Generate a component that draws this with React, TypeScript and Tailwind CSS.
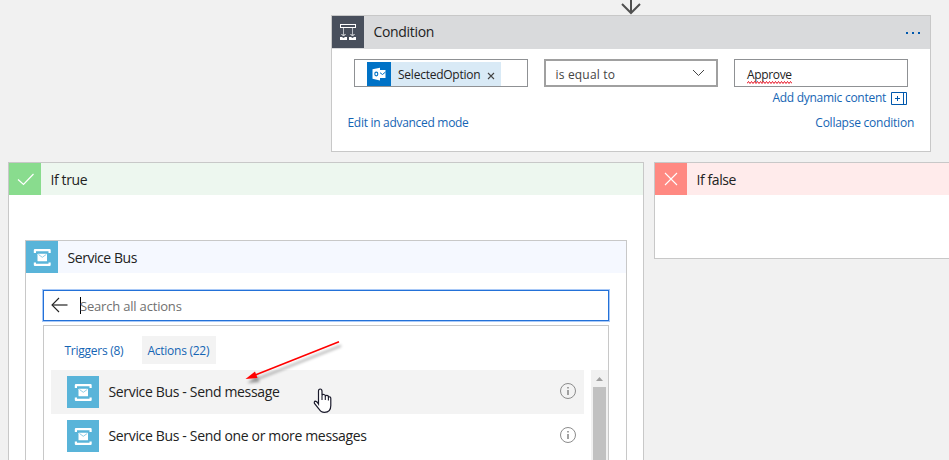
import React from 'react';

function ServiceBusIcon() {
  return (
    <span className="flex h-8 w-8 shrink-0 items-center justify-center bg-[#59b4d9]">
      <svg width="32" height="32" viewBox="0 0 32 32" fill="none">
        <path d="M8.900 12V9.200h14.700V12M8.900 21.500v2.400h14.700v-2.400" stroke="#fff" strokeWidth="2.200" strokeLinejoin="round" />
        <rect x="11.500" y="12.800" width="9.500" height="7.400" rx="0.500" fill="#fff" />
        <path d="M12.500 13.500l3.800 2.800 3.900-2.800" stroke="#8fcde6" strokeWidth="1" />
      </svg>
    </span>
  );
}

function InfoIcon() {
  return (
    <svg width="18" height="18" viewBox="0 0 18 18" fill="none">
      <circle cx="9" cy="9" r="7.500" stroke="#8c8c8c" />
      <path d="M9 5v1.500M9 8v5" stroke="#8c8c8c" strokeWidth="1.600" />
    </svg>
  );
}

function ActionRow({ label, active }: { label: string; active?: boolean }) {
  return (
    <div className={`flex h-11 w-[533px] items-center pl-4 pr-[7px] ${active ? 'bg-[#f3f3f3]' : 'bg-white'}`}>
      <ServiceBusIcon />
      <span className="-mt-px ml-[9.5px] grow text-[14px] tracking-[-0.34px]">{label}</span>
      <span className="-mt-[2px]"><InfoIcon /></span>
    </div>
  );
}

export default function App() {
  return (
    <div className="relative h-[460px] w-[949px] overflow-hidden whitespace-nowrap bg-[#f1f1f1] font-['Open_Sans','Noto_Sans',sans-serif] text-[#222]">
      <div className="flex h-[15px] pl-[620px]">
        <svg width="22" height="15" viewBox="0 0 22 15" fill="none">
          <path d="M11 0v13M2 4l9 9 9-9" stroke="#505050" strokeWidth="2" />
        </svg>
      </div>

      <section className="ml-[331px] h-[137px] w-[600px] border border-[#c8c8c8] bg-white">
        <header className="flex h-[33px] items-start bg-[#d9dadc]">
          <span className="h-8 w-8 bg-[#484f5c]">
            <svg width="32" height="32" viewBox="0 0 32 32" fill="none">
              <rect x="8.500" y="8.500" width="15" height="3" stroke="#fff" />
              <path d="M11.500 12v7M20.500 12v7" stroke="#b9bdc3" />
              <path d="M9.500 18l2 2 2-2M18.500 18l2 2 2-2" stroke="#fff" />
              <path d="M8 21h2l1.500 1L13 21h2v3H8zM17 21h2l1.500 1 1.500-1h2v3h-7z" fill="#fff" />
            </svg>
          </span>
          <span className="ml-[9.5px] grow text-[14px] leading-8 tracking-[-0.32px]">Condition</span>
          <svg className="mr-2 mt-[15px]" width="17" height="4" viewBox="0 0 17 4" fill="#0058ad">
            <path d="M1 1h2v2H1zM7 1h2v2H7zM13 1h2v2h-2z" />
          </svg>
        </header>
        <div className="flex gap-4 pl-[22px] pt-[10px]">
          <div className="flex h-7 w-[174px] border border-[#8f9194] pl-3 pt-[2px]">
            <div className="flex h-6 w-[134px] items-center bg-[#d9eaf6]">
              <svg width="24" height="24" viewBox="0 0 24 24" fill="none">
                <path d="M0 0h24v24H0z" fill="#0072c6" />
                <path d="M12 8h6.500v8H12z" fill="#fff" />
                <path d="M12 10l3.500 2.500 3-2.500" stroke="#0072c6" />
                <path d="M5.500 7.200l7.500-1.400v12.600l-7.500-1.600z" fill="#fff" />
                <ellipse cx="9.300" cy="12" rx="1.500" ry="1.900" stroke="#0072c6" strokeWidth="1.100" />
              </svg>
              <span className="ml-[7px] mt-[2px] text-[12px] tracking-[-0.24px]">SelectedOption</span>
              <svg className="ml-[7px] mt-[4px]" width="8" height="8" viewBox="0 0 8 8">
                <path d="M1 1l6 6M7 1L1 7" stroke="#444" strokeWidth="1.100" />
              </svg>
            </div>
          </div>
          <div className="flex h-7 w-[174px] items-center border-2 border-[#a0a0a0] pl-[9.5px] pr-[11px]">
            <span className="mt-[3px] grow text-[12px] tracking-[0.18px] text-[#444]">is equal to</span>
            <svg width="13" height="8" viewBox="0 0 13 8" fill="none">
              <path d="M1 1l5.500 5.500L12 1" stroke="#444" />
            </svg>
          </div>
          <div className="flex h-7 w-[174px] items-start border border-[#8f9194] pl-3">
            <span className="flex flex-col pt-[6px] text-[12px] leading-[18px]">
              <span className="tracking-[-0.35px]">Approve</span>
              <svg className="-mt-[3px]" width="45" height="3" viewBox="0 0 45 3" fill="none">
                <path d="M0 2.500l1.500-2 1.500 2 1.500-2 1.500 2 1.500-2 1.500 2 1.500-2 1.500 2 1.500-2 1.500 2 1.500-2 1.500 2 1.500-2 1.500 2 1.500-2 1.500 2 1.500-2 1.500 2 1.500-2 1.500 2 1.500-2 1.500 2 1.500-2 1.500 2 1.500-2 1.500 2 1.500-2 1.500 2 1.500-2 1.500 2" stroke="#e81123" />
              </svg>
            </span>
          </div>
        </div>
        <div className="flex h-[22px] items-center justify-end gap-[5px] pr-[23px] text-[12px] text-[#1565b4]">
          <span className="tracking-[-0.27px]">Add dynamic content</span>
          <svg width="16" height="13" viewBox="0 0 16 13" fill="none" stroke="#0058ad">
            <path d="M.5.5h15v12H.5zM12.500.5v12M4 6.500h5M6.500 4v5" />
          </svg>
        </div>
        <div className="flex h-[28px] items-center justify-between pl-[15.5px] pr-4 text-[12px] tracking-[-0.3px] text-[#1565b4]">
          <span>Edit in advanced mode</span>
          <span className="tracking-[-0.24px]">Collapse condition</span>
        </div>
      </section>

      <div className="mt-[10px] flex items-start gap-[10px] pl-2">
        <section className="h-[320px] w-[636px] shrink-0 border border-[#c8c8c8] bg-white">
          <header className="flex h-8 items-center bg-[#edf7ef]">
            <span className="h-8 w-8 bg-[#89dc8e]">
              <svg width="32" height="32" viewBox="0 0 32 32" fill="none">
                <path d="M9 16.500l5.500 5L24.500 11" stroke="#fff" strokeWidth="1.200" />
              </svg>
            </span>
            <span className="ml-[9.5px] text-[14px] tracking-[-0.4px]">If true</span>
          </header>

          <div className="ml-4 mt-[45px] h-[260px] w-[602px] border border-[#c8c8c8] bg-white">
            <header className="flex h-8 items-center bg-[#f5f8ff]">
              <ServiceBusIcon />
              <span className="ml-[9.5px] text-[14px] tracking-[-0.44px]">Service Bus</span>
            </header>
            <div className="ml-[17px] mt-[17px] flex h-[31px] w-[566px] items-center border border-[#2371d8] pl-[7px] shadow-[0_0_0_1px_#a9c9f7]">
              <svg className="-mt-px" width="17" height="16" viewBox="0 0 17 16" fill="none" stroke="#222">
                <path d="M16.500 8H1" strokeWidth="1.200" />
                <path d="M8 1L1 8l7 7" strokeWidth="1.100" />
              </svg>
              <span className="ml-[12px] h-[17px] w-px bg-black" />
              <span className="-ml-px mt-[2px] text-[13px] tracking-[-0.19px] text-[#707070]">Search all actions</span>
            </div>
            <div className="ml-[17px] mt-1 h-[200px] w-[566px] border border-[#c8c8c8] bg-white pt-[10px]">
              <div className="flex h-7 items-center pl-[20.5px] text-[12px] tracking-[-0.26px] text-[#1565b4]">
                <span className="w-[77.5px] pt-[2px]">Triggers (8)</span>
                <span className="flex h-7 w-[74px] items-center bg-[#f3f3f3] pl-[5.5px] pt-[2px]">Actions (22)</span>
              </div>
              <div className="mt-[6px] flex gap-[7px] pl-[7px]">
                <div>
                  <ActionRow label="Service Bus - Send message" active />
                  <ActionRow label="Service Bus - Send one or more messages" />
                </div>
                <div className="flex h-[150px] w-[17px] flex-col items-center bg-[#f1f1f1]">
                  <svg width="17" height="17" viewBox="0 0 17 17">
                    <path d="M5 11l3.500-4L12 11z" fill="#a0a0a0" />
                  </svg>
                  <span className="h-[133px] w-[13px] bg-[#c1c1c1]" />
                </div>
              </div>
            </div>
          </div>
        </section>

        <section className="h-[97px] w-[400px] shrink-0 border border-[#c8c8c8] bg-white">
          <header className="flex h-8 items-center bg-[#ffebeb]">
            <span className="h-8 w-8 bg-[#ff8982]">
              <svg width="32" height="32" viewBox="0 0 32 32" fill="none">
                <path d="M10 10l12 12M22 10L10 22" stroke="#fff" strokeWidth="1.100" />
              </svg>
            </span>
            <span className="ml-[9.5px] text-[14px] tracking-[-0.42px]">If false</span>
          </header>
        </section>
      </div>

      <svg className="absolute left-[240px] top-[335px]" width="110" height="55" viewBox="0 0 110 55">
        <g className="[filter:drop-shadow(2px_4px_1.5px_rgba(0,0,0,0.4))]">
          <path d="M99 6.800L14 40.500" stroke="#f00" strokeWidth="1.600" />
          <path d="M5.500 44l9.500-7.500 2.500 6.500z" fill="#f00" />
        </g>
      </svg>
      <svg className="absolute left-[313px] top-[388px]" width="19" height="26" viewBox="0 0 19 26">
        <path d="M5.500 16V3.200Q5.500 1 7.200 1T9 3.200V7.500Q9.300 6.300 10.700 6.500t1.700 1.400Q13.500 7 14.700 7.600q.7.500.8 1.300 2.200-.5 2.300 1.600V17.500q0 6.800-6.300 6.800-3.800 0-5.500-3.300L1.500 15.500Q.8 13.400 2.400 13.200 3.800 13.200 5.500 16z" fill="#fff" stroke="#1a1a2b" strokeWidth="1.200" />
        <path d="M9 7.500V12M12.300 8v4M15.400 9v3.500" stroke="#1a1a2b" strokeWidth="1.100" />
      </svg>
    </div>
  );
}
